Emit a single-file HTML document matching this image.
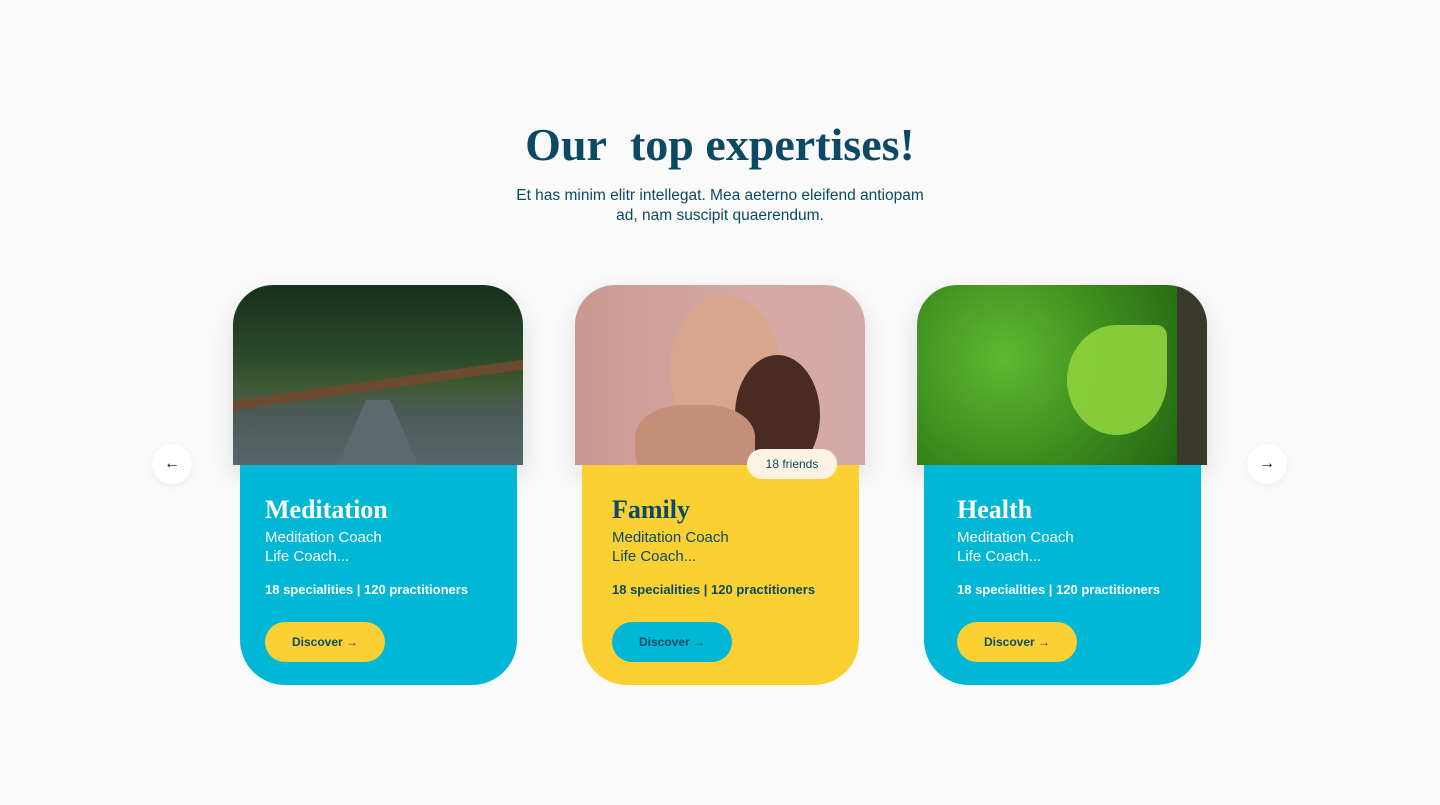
<!DOCTYPE html>
<html><head><style>
body{margin:0;width:1440px;height:805px;background:#fafafa;font-family:"Liberation Sans",sans-serif;position:relative;overflow:hidden;color:#0b4a62}
h1{position:absolute;top:118px;left:0;width:1440px;text-align:center;margin:0;font-family:"Liberation Serif",serif;font-weight:bold;font-size:46px;color:#0b4a62}
.sub{position:absolute;top:186px;left:420px;width:600px;text-align:center;font-size:15.5px;line-height:20px;color:#0b4a62}
.img{position:absolute;top:285px;width:290px;height:180px;border-radius:40px 40px 0 0;overflow:hidden;box-shadow:0 10px 25px rgba(0,0,0,.12)}
.body{position:absolute;top:465px;width:277px;height:220px;border-radius:0 0 45px 45px;box-sizing:border-box;padding:30px 25px;color:#fff}
.body h2{margin:0;font-family:"Liberation Serif",serif;font-size:26px;font-weight:bold;line-height:30px}
.body p{margin:3px 0 0;font-size:15px;line-height:19px}
.body .st{margin-top:14px;font-size:13px;font-weight:bold}
.btn{position:absolute;top:157px;width:120px;height:40px;border-radius:20px;font-size:12px;font-weight:bold;color:#0b4a62;text-align:center;line-height:40px}
.blue{background:#00b8d6}.yel{background:#fad033}
.arr{position:absolute;top:444px;width:40px;height:40px;border-radius:50%;background:#fff;box-shadow:0 2px 8px rgba(0,0,0,.06);text-align:center;line-height:40px;font-size:16px;color:#111}
</style></head><body>
<h1>Our&nbsp; top expertises!</h1>
<div class="sub">Et has minim elitr intellegat. Mea aeterno eleifend antiopam<br>ad, nam suscipit quaerendum.</div>
<div class="arr" style="left:152px">←</div>
<div class="arr" style="left:1247px">→</div>

<div class="img" style="left:233px;background:linear-gradient(180deg,#17301c 0%,#2a4a28 40%,#3c5a32 55%,#4a5a56 70%,#59666a 100%)">
<div style="position:absolute;left:0;top:95px;width:290px;height:10px;background:#6b4a30;transform:skewY(-8deg)"></div>
<div style="position:absolute;left:105px;top:115px;width:80px;height:65px;background:#5c6a6e;clip-path:polygon(35% 0,65% 0,100% 100%,0 100%)"></div>
</div>
<div class="body blue" style="left:240px;padding-left:25px"><h2>Meditation</h2><p>Meditation Coach<br>Life Coach...</p><p class="st">18 specialities | 120 practitioners</p><div class="btn yel" style="left:25px">Discover →</div></div>

<div class="img" style="left:575px;background:linear-gradient(90deg,#c99891 0%,#d6a9a4 60%,#d4aaa8 100%)">
<div style="position:absolute;left:95px;top:10px;width:110px;height:150px;border-radius:50%;background:#d8a58d"></div>
<div style="position:absolute;left:160px;top:70px;width:85px;height:120px;border-radius:50%;background:#4a2b22"></div>
<div style="position:absolute;left:60px;top:120px;width:120px;height:80px;border-radius:40%;background:#c58e78"></div>
</div>
<div class="body yel" style="left:582px;color:#0b4a62;padding-left:30px"><h2>Family</h2><p>Meditation Coach<br>Life Coach...</p><p class="st">18 specialities | 120 practitioners</p><div class="btn blue" style="left:30px">Discover →</div></div>
<div style="position:absolute;left:747px;top:449px;width:90px;height:30px;border-radius:15px;background:#fdf3e4;font-size:12px;text-align:center;line-height:30px;color:#0b4a62">18 friends</div>

<div class="img" style="left:917px;background:radial-gradient(circle at 30% 40%,#5fb832,#3a8a1c 50%,#1f5a10 100%)">
<div style="position:absolute;left:150px;top:40px;width:100px;height:110px;border-radius:50% 10% 50% 50%;background:#8fd43e;opacity:.9"></div>
<div style="position:absolute;right:0;top:0;width:30px;height:180px;background:#3a3a2a"></div>
</div>
<div class="body blue" style="left:924px;padding-left:33px"><h2>Health</h2><p>Meditation Coach<br>Life Coach...</p><p class="st">18 specialities | 120 practitioners</p><div class="btn yel" style="left:33px">Discover →</div></div>
</body></html>
